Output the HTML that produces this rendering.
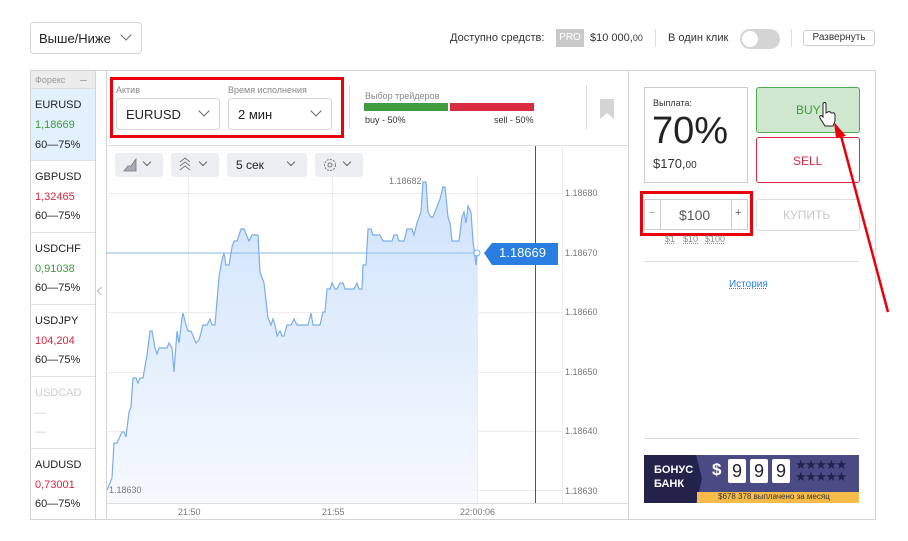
<!DOCTYPE html>
<html><head><meta charset="utf-8"><style>
*{box-sizing:border-box;margin:0;padding:0}
body{width:908px;height:541px;background:#fff;font-family:"Liberation Sans",Arial,sans-serif;position:relative;overflow:hidden;color:#222}
.a{position:absolute}
.sel{border:1px solid #d6d6d6;border-radius:4px;background:#fff}
.chev{position:absolute;width:8px;height:8px;border-right:1.2px solid #666;border-bottom:1.2px solid #666;transform:rotate(45deg)}
.it{position:absolute;left:30px;width:65px;font-size:11px;border-bottom:1px solid #e2e2e2}
.it div{position:absolute;left:5px}
.tb{position:absolute;top:153px;height:24px;background:#eceef2;border-radius:3px}
.yl{position:absolute;left:565px;font-size:9px;color:#777}
.xl{position:absolute;top:507px;font-size:9px;color:#777}
.gh{position:absolute;left:106px;width:456px;height:1px;background:#ececec}
.gv{position:absolute;top:177px;height:326px;width:1px;background:#ececec}
</style></head><body>
<!-- top -->
<div class="a sel" style="left:30px;top:22px;width:112px;height:32px;border-radius:4px"></div>
<div class="a" style="left:39px;top:31px;font-size:13px">Выше/Ниже</div>
<div class="chev" style="left:122px;top:31px"></div>
<div class="a" style="left:450px;top:32px;font-size:11px;color:#333">Доступно средств:</div>
<div class="a" style="left:556px;top:29px;width:28px;height:18px;background:#c9c9c9;font-size:10px;color:#fff;text-align:center;line-height:18px">PRO</div>
<div class="a" style="left:590px;top:32px;font-size:11px;color:#333">$10 000,<span style="font-size:9px">00</span></div>
<div class="a" style="left:655px;top:29px;width:1px;height:18px;background:#ddd"></div>
<div class="a" style="left:668px;top:32px;font-size:11px;color:#333">В один клик</div>
<div class="a" style="left:740px;top:29px;width:40px;height:20px;border-radius:10px;background:#d4d4d4"></div>
<div class="a" style="left:742px;top:31px;width:16px;height:16px;border-radius:8px;background:#fff"></div>
<div class="a" style="left:791px;top:29px;width:1px;height:18px;background:#ddd"></div>
<div class="a" style="left:803px;top:30px;width:72px;height:16px;border:1px solid #ccc;border-radius:3px;font-size:10px;text-align:center;line-height:14px;color:#333">Развернуть</div>

<!-- main frame -->
<div class="a" style="left:30px;top:70px;width:846px;height:450px;border:1px solid #d4d4d4"></div>
<div class="a" style="left:95px;top:70px;width:1px;height:450px;background:#d4d4d4"></div>
<div class="a" style="left:106px;top:70px;width:1px;height:450px;background:#d4d4d4"></div>
<div class="a" style="left:628px;top:70px;width:1px;height:450px;background:#d4d4d4"></div>
<div class="a" style="left:98px;top:288px;width:6px;height:6px;border-left:1px solid #bbb;border-bottom:1px solid #bbb;transform:rotate(45deg)"></div>

<!-- sidebar -->
<div class="a" style="left:31px;top:71px;width:64px;height:18px;background:#ececec;border-bottom:1px solid #ddd"></div>
<div class="a" style="left:35px;top:75px;font-size:9px;color:#999">Форекс</div>
<div class="a" style="left:80px;top:80px;width:7px;height:1px;background:#aaa"></div>
<div class="it" style="top:89px;height:72px;background:#e3f0fd;left:31px;width:64px"><div style="top:10px;left:4px">EURUSD</div><div style="top:30px;left:4px;color:#3f9a3f">1,18669</div><div style="top:50px;left:4px">60—75%</div></div>
<div class="it" style="top:161px;height:72px"><div style="top:10px">GBPUSD</div><div style="top:30px;color:#d9263e">1,32465</div><div style="top:49px">60—75%</div></div>
<div class="it" style="top:233px;height:72px"><div style="top:10px">USDCHF</div><div style="top:30px;color:#3f9a3f">0,91038</div><div style="top:49px">60—75%</div></div>
<div class="it" style="top:305px;height:72px"><div style="top:10px">USDJPY</div><div style="top:30px;color:#d9263e">104,204</div><div style="top:49px">60—75%</div></div>
<div class="it" style="top:377px;height:72px;color:#ccc"><div style="top:10px">USDCAD</div><div style="top:30px">—</div><div style="top:49px">—</div></div>
<div class="it" style="top:449px;height:70px;border:none"><div style="top:10px">AUDUSD</div><div style="top:30px;color:#d9263e">0,73001</div><div style="top:49px">60—75%</div></div>

<!-- chart header -->
<div class="a" style="left:107px;top:145px;width:521px;height:1px;background:#e0e0e0"></div>
<div class="a" style="left:110px;top:77px;width:234px;height:61px;border:3px solid #e8000b"></div>
<div class="a" style="left:116px;top:85px;font-size:9px;color:#888">Актив</div>
<div class="a" style="left:228px;top:85px;font-size:9px;color:#888">Время исполнения</div>
<div class="a sel" style="left:116px;top:98px;width:104px;height:32px"></div>
<div class="a" style="left:126px;top:107px;font-size:13px">EURUSD</div>
<div class="chev" style="left:200px;top:107px"></div>
<div class="a sel" style="left:228px;top:98px;width:104px;height:32px"></div>
<div class="a" style="left:238px;top:107px;font-size:13px">2 мин</div>
<div class="chev" style="left:312px;top:107px"></div>
<div class="a" style="left:349px;top:85px;width:1px;height:44px;background:#ddd"></div>
<div class="a" style="left:365px;top:91px;font-size:9px;color:#888">Выбор трейдеров</div>
<div class="a" style="left:364px;top:103px;width:84px;height:8px;background:#3e9c3e"></div>
<div class="a" style="left:450px;top:103px;width:84px;height:8px;background:#d82a41"></div>
<div class="a" style="left:365px;top:115px;font-size:9px;color:#333">buy - 50%</div>
<div class="a" style="left:494px;top:115px;font-size:9px;color:#333">sell - 50%</div>
<div class="a" style="left:586px;top:85px;width:1px;height:44px;background:#ddd"></div>
<svg class="a" style="left:600px;top:99px" width="14" height="20"><path d="M0 0H14V20L7 14L0 20Z" fill="#d4d4d4"/></svg>

<!-- toolbar -->
<div class="tb" style="left:115px;width:48px"></div>
<svg class="a" style="left:123px;top:158px" width="14" height="14"><path d="M1 13L5 8L8 8L13 1V13Z" fill="#aab" stroke="#777" stroke-width=".8"/></svg>
<div class="chev" style="left:144px;top:159px;width:6px;height:6px"></div>
<div class="tb" style="left:171px;width:48px"></div>
<svg class="a" style="left:179px;top:157px" width="12" height="16" fill="none" stroke="#777"><path d="M1 5L6 1L11 5M1 9L6 5L11 9M1 13L6 9L11 13"/></svg>
<div class="chev" style="left:200px;top:159px;width:6px;height:6px"></div>
<div class="tb" style="left:227px;width:80px"></div>
<div class="a" style="left:236px;top:158px;font-size:12px">5 сек</div>
<div class="chev" style="left:288px;top:159px;width:6px;height:6px"></div>
<div class="tb" style="left:315px;width:48px"></div>
<svg class="a" style="left:323px;top:158px" width="14" height="14" fill="none" stroke="#777"><circle cx="7" cy="7" r="5.5" stroke-dasharray="2 1.2"/><circle cx="7" cy="7" r="2"/></svg>
<div class="chev" style="left:344px;top:159px;width:6px;height:6px"></div>

<!-- grid -->
<div class="gh" style="top:193px"></div><div class="gh" style="top:312px"></div><div class="gh" style="top:372px"></div><div class="gh" style="top:431px"></div><div class="gh" style="top:490px"></div>
<div class="gv" style="left:188px"></div><div class="gv" style="left:332px"></div><div class="gv" style="left:477px"></div>
<div class="a" style="left:535px;top:146px;width:1px;height:357px;background:#555"></div>
<div class="a" style="left:562px;top:146px;width:1px;height:357px;background:#eee"></div>
<div class="a" style="left:106px;top:503px;width:522px;height:1px;background:#ddd"></div>

<svg class="a" style="left:0;top:0" width="908" height="541">
<defs><linearGradient id="g" x1="0" y1="0" x2="0" y2="1"><stop offset="0" stop-color="#cfe3fb"/><stop offset="1" stop-color="#f6f9fe"/></linearGradient></defs>
<path id="p" d="M107 490L112 478L114 443L117 443L122 432L124 432L126 437L129 412L131 407L133 378L136 378L138 383L140 378L143 378L147 355L150 331L152 331L155 348L157 354L159 348L167 348L169 343L172 348L174 372L177 331L179 343L182 318L183 313L186 325L188 331L191 331L196 343L199 340L203 325L207 325L210 319L212 325L215 325L219 277L222 260L224 253L226 265L229 265L232 247L234 241L237 241L241 229L244 229L249 241L252 235L258 235L260 272L264 283L268 318L271 325L273 319L275 325L277 336L280 331L282 336L284 336L287 325L291 325L294 319L297 325L308 325L311 313L313 325L320 325L323 312L325 312L327 289L330 289L332 283L335 289L337 289L340 283L343 283L345 289L354 289L357 283L359 289L362 289L363 265L366 265L368 229L371 229L373 235L380 235L383 241L392 241L394 235L397 235L399 241L404 241L407 229L412 229L414 235L417 223L421 212L423 182L426 182L428 212L431 217L433 217L440 199L443 187L445 187L448 217L450 223L452 241L459 241L462 217L464 212L466 223L468 206L471 212L473 241L476 265L477 253" fill="none"/>
<path d="M107 490L112 478L114 443L117 443L122 432L124 432L126 437L129 412L131 407L133 378L136 378L138 383L140 378L143 378L147 355L150 331L152 331L155 348L157 354L159 348L167 348L169 343L172 348L174 372L177 331L179 343L182 318L183 313L186 325L188 331L191 331L196 343L199 340L203 325L207 325L210 319L212 325L215 325L219 277L222 260L224 253L226 265L229 265L232 247L234 241L237 241L241 229L244 229L249 241L252 235L258 235L260 272L264 283L268 318L271 325L273 319L275 325L277 336L280 331L282 336L284 336L287 325L291 325L294 319L297 325L308 325L311 313L313 325L320 325L323 312L325 312L327 289L330 289L332 283L335 289L337 289L340 283L343 283L345 289L354 289L357 283L359 289L362 289L363 265L366 265L368 229L371 229L373 235L380 235L383 241L392 241L394 235L397 235L399 241L404 241L407 229L412 229L414 235L417 223L421 212L423 182L426 182L428 212L431 217L433 217L440 199L443 187L445 187L448 217L450 223L452 241L459 241L462 217L464 212L466 223L468 206L471 212L473 241L476 265L477 253L477 503L107 503Z" fill="url(#g)"/>
<use href="#p" stroke="#7aaee8" stroke-width="1.2"/>
<line x1="106" y1="253" x2="480" y2="253" stroke="#8ab4ea" stroke-width="1"/>
<circle cx="477" cy="253" r="3" fill="#fff" stroke="#7aaee8"/>
<path d="M484 253L492 243H558V265H492Z" fill="#2a7de1"/>
</svg>
<div class="a" style="left:499px;top:245px;font-size:13px;color:#fff">1.18669</div>
<div class="a" style="left:389px;top:176px;font-size:9px;color:#777">1.18682</div>
<div class="a" style="left:109px;top:485px;font-size:9px;color:#777">1.18630</div>
<div class="yl" style="top:188px">1.18680</div><div class="yl" style="top:248px">1.18670</div><div class="yl" style="top:307px">1.18660</div><div class="yl" style="top:367px">1.18650</div><div class="yl" style="top:426px">1.18640</div><div class="yl" style="top:486px">1.18630</div>
<div class="xl" style="left:178px">21:50</div><div class="xl" style="left:322px">21:55</div><div class="xl" style="left:460px">22:00:06</div>

<!-- right panel -->
<div class="a" style="left:644px;top:87px;width:104px;height:96px;border:1px solid #ccc"></div>
<div class="a" style="left:653px;top:98px;font-size:9px;color:#333">Выплата:</div>
<div class="a" style="left:652px;top:110px;font-size:38px;color:#222">70%</div>
<div class="a" style="left:653px;top:156px;font-size:13px;color:#333">$170,<span style="font-size:10px">00</span></div>
<div class="a" style="left:756px;top:87px;width:104px;height:46px;border:1px solid #4caa4c;border-radius:3px;background:#cfe7cf"></div>
<div class="a" style="left:796px;top:103px;font-size:12px;color:#3e9c3e">BUY</div>
<div class="a" style="left:756px;top:137px;width:104px;height:46px;border:1px solid #d82a41;border-radius:3px"></div>
<div class="a" style="left:793px;top:154px;font-size:12px;color:#d82a41">SELL</div>
<div class="a" style="left:640px;top:191px;width:113px;height:45px;border:3px solid #e8000b"></div>
<div class="a" style="left:644px;top:199px;width:104px;height:31px;border:1px solid #ccc"></div>
<div class="a" style="left:660px;top:199px;width:1px;height:31px;background:#ccc"></div>
<div class="a" style="left:731px;top:199px;width:1px;height:31px;background:#ccc"></div>
<div class="a" style="left:649px;top:207px;font-size:11px;color:#999">−</div>
<div class="a" style="left:735px;top:207px;font-size:11px;color:#555">+</div>
<div class="a" style="left:679px;top:207px;font-size:14px;color:#555">$100</div>
<div class="a" style="left:665px;top:234px;font-size:9px;color:#888;text-decoration:underline dotted">$1</div>
<div class="a" style="left:683px;top:234px;font-size:9px;color:#888;text-decoration:underline dotted">$10</div>
<div class="a" style="left:705px;top:234px;font-size:9px;color:#888;text-decoration:underline dotted">$100</div>
<div class="a" style="left:756px;top:199px;width:104px;height:32px;border:1px solid #ddd;border-radius:3px"></div>
<div class="a" style="left:783px;top:208px;font-size:12px;color:#c8c8c8">КУПИТЬ</div>
<div class="a" style="left:644px;top:261px;width:215px;height:1px;background:#ddd"></div>
<div class="a" style="left:729px;top:279px;font-size:10px;color:#2a7de1;text-decoration:underline dotted">История</div>
<div class="a" style="left:644px;top:438px;width:215px;height:1px;background:#ddd"></div>
<!-- bonus -->
<div class="a" style="left:644px;top:455px;width:215px;height:48px;background:#4a4a85"></div>
<svg class="a" style="left:644px;top:455px" width="215" height="48"><path d="M0 0H52L58 24L52 48H0Z" fill="#22224a"/><rect x="53" y="37" width="162" height="11" fill="#f7bb4a"/></svg>
<div class="a" style="left:654px;top:463px;font-size:11px;font-weight:bold;color:#fff;line-height:14px">БОНУС<br>БАНК</div>
<div class="a" style="left:712px;top:460px;font-size:17px;font-weight:bold;color:#fff">$</div>
<div class="a" style="left:728px;top:459px;width:18px;height:24px;background:#fff;border-radius:2px;font-size:18px;text-align:center;line-height:24px;color:#223">9</div>
<div class="a" style="left:750px;top:459px;width:18px;height:24px;background:#fff;border-radius:2px;font-size:18px;text-align:center;line-height:24px;color:#223">9</div>
<div class="a" style="left:772px;top:459px;width:18px;height:24px;background:#fff;border-radius:2px;font-size:18px;text-align:center;line-height:24px;color:#223">9</div>
<div class="a" style="left:795px;top:459px;font-size:13px;color:#22224a;line-height:12px;letter-spacing:-1.5px">★★★★★<br>★★★★★</div>
<div class="a" style="left:718px;top:492px;font-size:8px;color:#333">$678 378 выплачено за месяц</div>
<!-- red arrow -->
<svg class="a" style="left:0;top:0" width="908" height="541"><line x1="888" y1="312" x2="840" y2="132" stroke="#e8000b" stroke-width="2.5"/><path d="M834 122L846 136L836 138Z" fill="#e8000b"/></svg>
<svg class="a" style="left:818px;top:102px" width="18" height="26"><path d="M5 2C5 0 8 0 8 2V11L10 10C11 9 13 10 13 11L15 11C16 10 17 12 17 13V19L15 24H7L2 16C1 14 3 13 4 14L5 15Z" fill="#fff" stroke="#222" stroke-width="1"/></svg>
</body></html>
